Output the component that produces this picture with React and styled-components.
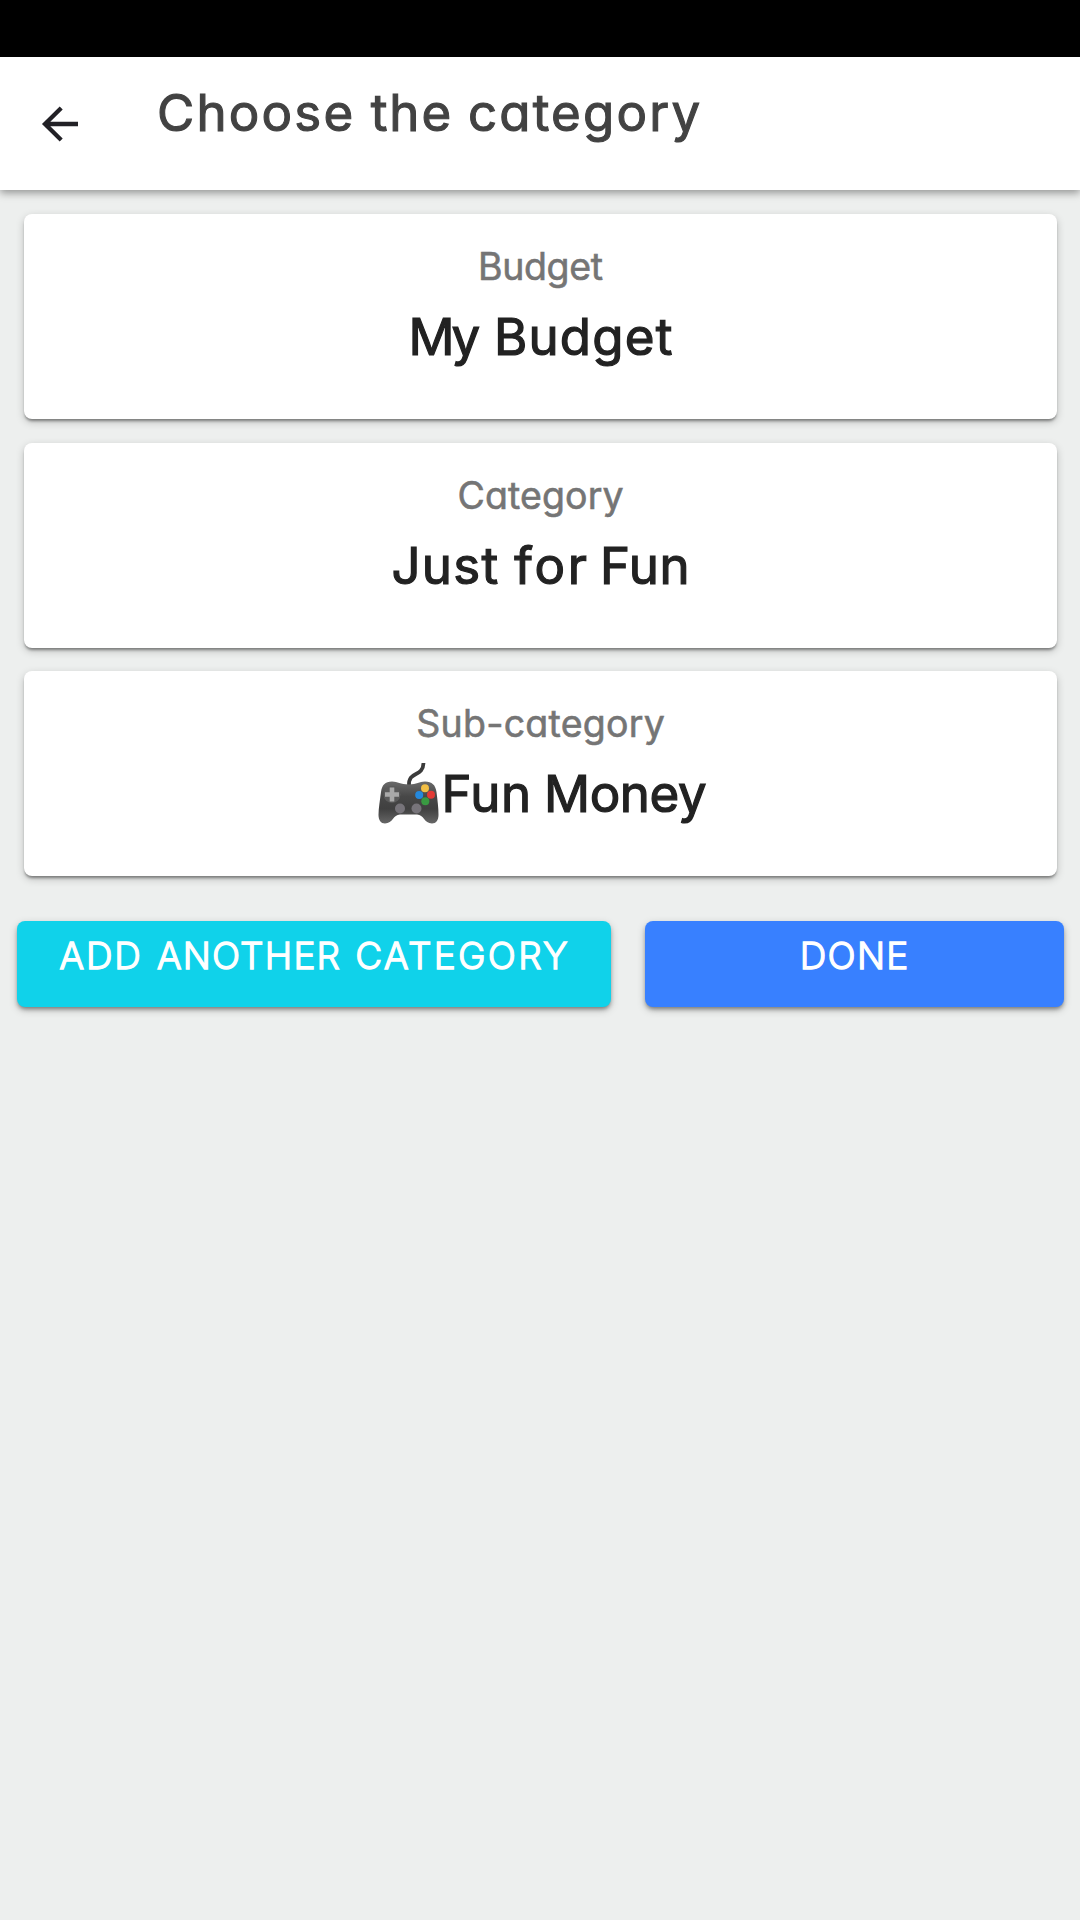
import React from "react";
import styled, { createGlobalStyle } from "styled-components";

const Global = createGlobalStyle`
  * { box-sizing: border-box; }
  body {
    margin: 0;
    background: #edefee;
    font-family: Inter, "Noto Sans", sans-serif;
    font-feature-settings: "cv11" 1;
    font-weight: 400;
  }
`;

const Screen = styled.div`
  width: 1080px;
  min-height: 1920px;
  display: flex;
  flex-direction: column;
  background: #edefee;
`;

const StatusBar = styled.div`
  height: 57px;
  background: #000;
`;

const Header = styled.header`
  height: 133px;
  display: flex;
  align-items: flex-start;
  background: #fff;
  box-shadow: 0 3px 8px rgba(0, 0, 0, 0.38);
`;

const BackButton = styled.button`
  width: 157px;
  height: 133px;
  padding: 0 0 0 41px;
  border: 0;
  background: none;
  display: flex;
  align-items: center;
`;

const Title = styled.h1`
  margin: 26px 0 0;
  font-size: 51px;
  line-height: 60px;
  font-weight: 400;
  white-space: nowrap;
  word-spacing: 0.5px;
  color: #424242;
  -webkit-text-stroke: 1.1px currentColor;
`;

const Cards = styled.main`
  display: flex;
  flex-direction: column;
  gap: 23.5px;
  padding: 24px 23px 0 24px;
`;

const Card = styled.section`
  height: 205px;
  padding-top: 31px;
  display: flex;
  flex-direction: column;
  align-items: center;
  gap: 18px;
  background: #fff;
  border-radius: 8px;
  box-shadow: 0 3px 3px -1px rgba(0, 0, 0, 0.4), 0 3px 9px rgba(0, 0, 0, 0.2);
`;

const Label = styled.div`
  font-size: 37.5px;
  line-height: 44px;
  white-space: nowrap;
  color: #757575;
  -webkit-text-stroke: 0.6px currentColor;
`;

const Value = styled.div`
  display: flex;
  align-items: flex-start;
  font-size: 51px;
  line-height: 60px;
  white-space: nowrap;
  word-spacing: ${(p) => p.$gap || 0}px;
  color: #222;
  -webkit-text-stroke: 1.2px currentColor;
`;

const Word = styled.span`
  letter-spacing: ${(p) => p.$track || 0}px;
  margin-left: ${(p) => p.$kern || 0}px;
  margin-right: ${(p) => -(p.$track || 0)}px;
`;

const Actions = styled.div`
  display: flex;
  gap: 34px;
  padding: 45px 16px 0 17px;
`;

const ActionButton = styled.button`
  width: ${(p) => p.$width}px;
  height: 86px;
  padding: 13px 0 0;
  border: 0;
  border-radius: 8px;
  display: flex;
  align-items: flex-start;
  justify-content: center;
  background: ${(p) => p.$color};
  color: #fff;
  font: inherit;
  font-feature-settings: inherit;
  font-weight: 300;
  font-size: 37px;
  line-height: 44px;
  white-space: nowrap;
  -webkit-text-stroke: 1.3px currentColor;
  box-shadow: 0 3px 4px -1px rgba(0, 0, 0, 0.4), 0 3px 9px rgba(0, 0, 0, 0.2);
`;

const ButtonText = styled.span`
  margin-left: -1px;
  word-spacing: 3.5px;
`;

const PadIcon = styled.svg`
  width: 61px;
  height: 62px;
  flex: none;
  margin: -2px 0 0 4px;
`;

/* A run of words, each with its own tracking, joined by real spaces. */
const words = (list) =>
  list.map(([text, track, kern], i) => (
    <React.Fragment key={text}>
      {i > 0 && " "}
      <Word $track={track} $kern={(i > 0 ? list[i - 1][1] : 0) + (kern || 0)}>
        {text}
      </Word>
    </React.Fragment>
  ));

const Gamepad = () => (
  <PadIcon viewBox="0 0 61 62" aria-label="video game">
    <defs>
      <linearGradient id="shell" x1="0" y1="0" x2="0" y2="1">
        <stop offset="0" stopColor="#6a6a6a" />
        <stop offset="0.35" stopColor="#484848" />
        <stop offset="0.65" stopColor="#404040" />
        <stop offset="1" stopColor="#666" />
      </linearGradient>
    </defs>
    <path d="M31 24C30 8 45 16 45.5 1" fill="none" stroke="#3b3b3b" strokeWidth="3.800" strokeLinecap="butt" />
    <path
      d="M14 19.500C20 19.500 22 22.500 31 22.500C39 22.500 41 19.500 47 19.500C54 19.500 57.500 23 58.500 30C59.500 38 60.500 46 60.500 53C60.500 58 58 61.500 54 61.500C46 61.500 46 52.500 39 52.500H22C15 52.500 15 61.500 7 61.500C3 61.500 .5 58 .5 53C.5 46 2 38 3 30C4 23 7 19.500 14 19.500Z"
      fill="url(#shell)"
    />
    <circle cx="14" cy="32.500" r="8.500" fill="#5a5a5a" />
    <path d="M14 25.500V39.500M7 32.500H21" stroke="#a9a9a9" strokeWidth="4.600" />
    <circle cx="22" cy="46.500" r="5" fill="#77747a" />
    <circle cx="38.500" cy="46.500" r="5" fill="#77747a" />
    <circle cx="47" cy="26.300" r="4" fill="#f2bf45" />
    <circle cx="41.200" cy="33" r="4" fill="#2488dc" />
    <circle cx="53" cy="32.800" r="4" fill="#e23a35" />
    <circle cx="47.300" cy="39.200" r="4" fill="#399a42" />
  </PadIcon>
);

const BackArrow = () => (
  <svg width="38" height="36" viewBox="0 0 38 36" fill="none" stroke="#222126" strokeWidth="4.300">
    <path d="M37 18H4M20.200 2L4 18L20.200 34" />
  </svg>
);

export default function App() {
  return (
    <Screen>
      <Global />
      <StatusBar />
      <Header>
        <BackButton aria-label="Back">
          <BackArrow />
        </BackButton>
        <Title>{words([["Choose", 2.2], ["the", 1.9, 0.5], ["category", 2.2]])}</Title>
      </Header>
      <Cards>
        <Card>
          <Label>{words([["Budget", -0.4]])}</Label>
          <Value $gap={3}>
            <span>{words([["My", -3.5], ["Budget", 1.2]])}</span>
          </Value>
        </Card>
        <Card>
          <Label>{words([["Category", 0.1]])}</Label>
          <Value $gap={0.5}>
            <span>{words([["Just", 1.3], ["for", 2.7], ["Fun", 0.5, -4.5]])}</span>
          </Value>
        </Card>
        <Card>
          <Label>{words([["Sub-category", 0.25]])}</Label>
          <Value $gap={-2}>
            <Gamepad />
            <span>{words([["Fun", 0.5, 2], ["Money", -0.4]])}</span>
          </Value>
        </Card>
      </Cards>
      <Actions>
        <ActionButton $width={594} $color="#10d2ea">
          <ButtonText>{words([["ADD", 1.8], ["ANOTHER", 1.2], ["CATEGORY", 2.3]])}</ButtonText>
        </ActionButton>
        <ActionButton $width={419} $color="#3880ff">
          <ButtonText>{words([["DONE", 1.3]])}</ButtonText>
        </ActionButton>
      </Actions>
    </Screen>
  );
}
